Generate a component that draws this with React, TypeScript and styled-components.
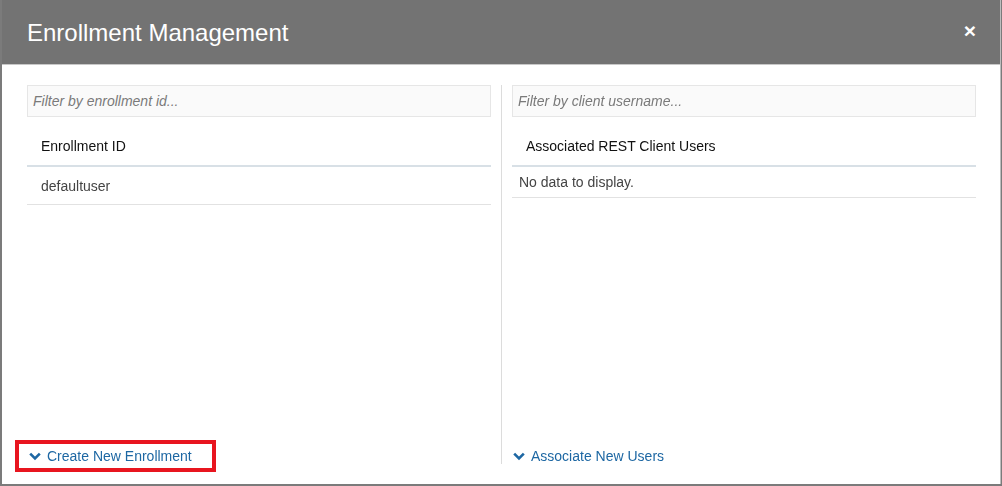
import React from "react";
import styled, { createGlobalStyle } from "styled-components";

const Global = createGlobalStyle`
  html, body { margin: 0; padding: 0; }
  body {
    background: #7b7b7b;
    font-family: "Liberation Sans", Arial, sans-serif;
    width: 1002px;
    height: 486px;
    overflow: hidden;
  }
`;

const Modal = styled.div`
  margin-left: 2px;
  width: 999px;
  height: 484px;
  background: #fff;
  border-right: 1px solid #bdbdbd;
  box-sizing: border-box;
  display: flex;
  flex-direction: column;
`;

const Header = styled.div`
  height: 65px;
  background: #737373;
  border-bottom: 1px solid #c8c8c8;
  display: flex;
  align-items: center;
  justify-content: space-between;
  padding: 0 24px 0 25px;
  box-sizing: border-box;
  flex: none;
`;

const Title = styled.h1`
  margin: 0;
  font-size: 24px;
  font-weight: 400;
  color: #fff;
  padding-top: 1px;
`;

const Close = styled.span`
  color: #fff;
  font-size: 21px;
  font-weight: 700;
  line-height: 1;
  margin-top: -4px;
`;

const Body = styled.div`
  flex: 1;
  display: flex;
  padding: 20px 24px 20px 25px;
  min-height: 0;
`;

const Column = styled.div<{ $side: "left" | "right" }>`
  flex: 1;
  display: flex;
  flex-direction: column;
  ${(p) =>
    p.$side === "left"
      ? "padding-right: 10px; border-right: 1px solid #dcdcdc;"
      : "padding-left: 10px;"}
`;

const Filter = styled.input`
  height: 32px;
  box-sizing: border-box;
  border: 1px solid #e6e6e6;
  background: #fafafa;
  font-family: "Liberation Sans", Arial, sans-serif;
  font-size: 14px;
  padding: 0 5px;
  outline: none;
  color: #333;
  caret-color: #222;
  &::placeholder {
    color: #7a7a7a;
    font-style: italic;
  }
`;

const TableHead = styled.div`
  margin-top: 10px;
  height: 38px;
  display: flex;
  align-items: center;
  padding: 0 14px;
  font-size: 14px;
  color: #111;
  border-bottom: 2px solid #d8e0e6;
`;

const Row = styled.div<{ $pad: number; $h: number }>`
  height: ${(p) => p.$h}px;
  display: flex;
  align-items: center;
  padding: 0 ${(p) => p.$pad}px;
  font-size: 14px;
  color: #444;
  border-bottom: 1px solid #e2e2e2;
`;

const Spacer = styled.div`
  flex: 1;
`;

const LinkWrap = styled.div<{ $pad: number }>`
  display: flex;
  padding-left: ${(p) => p.$pad}px;
`;

const Link = styled.a`
  position: relative;
  display: inline-flex;
  align-items: center;
  gap: 6px;
  color: #1d67a3;
  font-size: 14px;
  line-height: 16px;
  text-decoration: none;
  cursor: pointer;
`;

const Highlight = styled.span`
  position: absolute;
  left: -14px;
  top: -8px;
  width: 201px;
  height: 32px;
  border: 4px solid #e8151f;
  box-sizing: border-box;
  pointer-events: none;
`;

const Chevron = () => (
  <svg width="12" height="9" viewBox="0 0 12 9">
    <path d="M1.2 1.6 L6 6.4 L10.8 1.6" fill="none" stroke="#1d67a3" strokeWidth="2.6" />
  </svg>
);

export default function App() {
  return (
    <>
      <Global />
      <Modal>
        <Header>
          <Title>Enrollment Management</Title>
          <Close>×</Close>
        </Header>
        <Body>
          <Column $side="left">
            <Filter placeholder="Filter by enrollment id..." autoFocus />
            <TableHead>Enrollment ID</TableHead>
            <Row $pad={14} $h={37}>defaultuser</Row>
            <Spacer />
            <LinkWrap $pad={2}>
              <Link>
                <Highlight />
                <Chevron />
                Create New Enrollment
              </Link>
            </LinkWrap>
          </Column>
          <Column $side="right">
            <Filter placeholder="Filter by client username..." />
            <TableHead>Associated REST Client Users</TableHead>
            <Row $pad={7} $h={30}>No data to display.</Row>
            <Spacer />
            <LinkWrap $pad={1}>
              <Link>
                <Chevron />
                Associate New Users
              </Link>
            </LinkWrap>
          </Column>
        </Body>
      </Modal>
    </>
  );
}
